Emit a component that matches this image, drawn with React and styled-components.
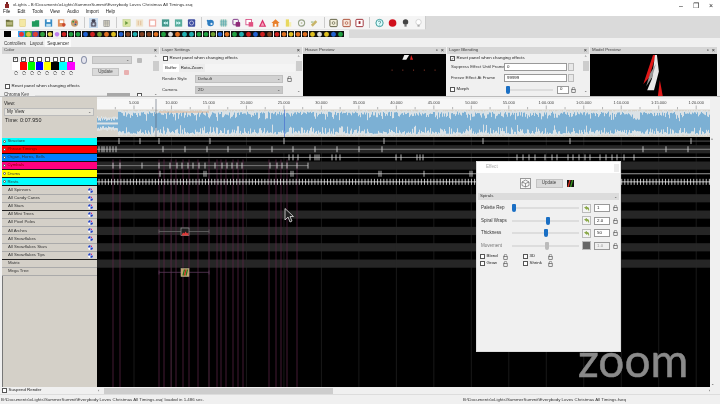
import React from 'react';
import styled, { createGlobalStyle } from 'styled-components';

const Global = createGlobalStyle`
  html, body { margin: 0; padding: 0; background: #f0f0f0; overflow: hidden; }
  * { box-sizing: border-box; }
`;

const Page = styled.div`
  width: 720px; height: 404px; display: flex; flex-direction: column; overflow: hidden;
  background: #f0f0f0; color: #222; filter: blur(0.3px);
  font: 4.5px/1 "Liberation Sans", Arial, sans-serif;
`;
const TitleBar = styled.div`
  height: 9px; background: #fff; display: flex; align-items: center; padding: 1px 6px 0 5px; gap: 4px; font-size: 4.4px;
`;
const TitleText = styled.span`flex: 1; color: #333;`;
const WinButtons = styled.div`display: flex; gap: 10px; font-size: 7px; color: #222; padding-right: 1px;`;
const MenuBar = styled.div`
  height: 7px; background: #fff; display: flex; align-items: center; padding-left: 3px; gap: 7px; font-size: 4.6px;
`;
const ToolBand = styled.div`background: #dadada; height: 22px; display: flex; flex-direction: column;`;
const ToolRow = styled.div`
  height: 14px; width: 426px; background: #f5f5f5; display: flex; align-items: center; padding-left: 5px; border-right: 1px solid #ccc; border-bottom: 1px solid #e4e4e4;
`;
const ToolGroup = styled.div`
  display: flex; gap: 3.9px; padding-right: 5px; margin-right: 4.3px; border-right: 1px solid #ccc; height: 11px; align-items: center;
  &:last-child { border-right: 0; padding-right: 0; margin-right: 0; }
`;
const ToolSlot = styled.div`width: 9.1px; height: 10px; display: flex; align-items: center; justify-content: center; background: ${p => p.$on ? '#c8dcf0' : 'transparent'};`;
const FxStrip = styled.div`height: 8px; width: 349px; background: #f0f0f0; display: flex; gap: 0.6px; padding: 1px 0 1px 4px;`;
const FxIcon = styled.div`width: 6.5px; height: 6px; background: radial-gradient(circle at 50% 55%, ${p => p.$b} 0 38%, ${p => p.$a} 62%);`;
const TabStrip = styled.div`height: 9px; background: #f0f0f0; display: flex; align-items: flex-end; padding-left: 2px; gap: 0; `;
const Tab = styled.div`padding: 3px 2px 0; height: 8px; color: #333; background: ${p => p.$on ? '#fafafa' : 'transparent'};`;

const PanelRow = styled.div`
  height: 50px; display: grid; grid-template-columns: 157px 142px 143px 142px 127px; gap: 1px; padding-left: 2px; background: #f0f0f0; border-bottom: 1px solid #bbb;
`;
const Panel = styled.section`display: flex; flex-direction: column; overflow: hidden; background: #f0f0f0; min-width: 0;`;
const PanelHead = styled.header`
  height: 7px; background: #d6d6d6; display: flex; align-items: center; padding: 0 2px; gap: 3px; color: #444; font-size: 4.4px; flex: none;
`;
const PanelTitle = styled.span`flex: 1;`;
const HeadBtn = styled.span`font-size: 5.5px; color: #222; line-height: 5px;`;
const PanelBody = styled.div`flex: 1; min-height: 0; display: grid; grid-template-columns: 1fr 7px; background: #f0f0f0;`;
const Scroll = styled.div`
  background: #f0f0f0; display: flex; flex-direction: column; align-items: center; justify-content: space-between; padding: 2px 0; position: relative; font-size: 3.6px; color: #444;
`;
const ScrollThumb = styled.div`width: 6px; height: 10px; background: #cdcdcd; margin-top: 1px; margin-bottom: auto;`;
const BlackPane = styled.div`flex: 1; background: #000; min-height: 0;`;
const PaneSvg = styled.svg`display: block; width: 100%; height: 100%;`;

const ColorBody = styled.div`display: flex; flex-direction: column; padding: 2px 0 0 2px; gap: 2px;`;
const ColorTop = styled.div`display: flex; height: 26px;`;
const Palette = styled.div`
  margin-left: 8px; width: 63px; display: grid; grid-template-columns: repeat(8, 7.85px); grid-template-rows: 6px 8px 6px; justify-items: center; align-items: center;
`;
const Swatch = styled.div`width: 7.4px; height: 7.5px; background: ${p => p.$c};`;
const DotMark = styled.div`width: 4px; height: 4px; border: 1px dotted #444; border-radius: 50%;`;
const ColorSide = styled.div`margin-left: 6px; display: flex; flex-direction: column; gap: 4px; padding-top: 0;`;
const SideRow = styled.div`display: flex; align-items: center; gap: 5px;`;
const RoundIcon = styled.div`width: 6px; height: 8px; border: 1px solid #8890a8; border-radius: 50%; background: #e4e4ee;`;
const SelectBox = styled.div`
  width: ${p => p.$w || 40}px; height: ${p => p.$h || 8}px; background: ${p => p.$bg || '#d2d2d2'}; border: 1px solid #c0c0c0; display: flex; align-items: center; justify-content: space-between; padding: 0 2px; color: #333; font-size: 4.4px;
`;
const Caret = styled.span`font-size: 4px; color: #444;`;
const SmallGlyph = styled.div`width: 5px; height: 5px; background: ${p => p.$c || '#bbb'}; border-radius: 1px;`;
const UpdateBtn = styled.button`
  width: ${p => p.$w || 27}px; height: ${p => p.$h || 8}px; background: #dadada; border: 1px solid #c4c4c4; padding: 0; font: inherit; color: #444; font-size: 4.5px; margin-left: ${p => p.$ml || 0}px;
`;
const CheckRow = styled.label`display: flex; align-items: center; gap: 1.5px; color: #222; font-size: 4.4px; white-space: nowrap; padding-left: ${p => p.$pl || 0}px;`;
const Box = styled.span`
  width: 5px; height: 5px; border: 0.7px solid #555; background: #fff; flex: none; display: inline-flex; align-items: center; justify-content: center; font-size: 4px; color: #222; line-height: 1;
`;
const ChromaRow = styled.div`display: flex; align-items: center; height: 7px; margin-top: 1px;`;
const ChromaLabel = styled.span`width: 31px; color: #333;`;
const ChromaTrack = styled.div`width: 72px; height: 2px; background: #ddd;`;
const ChromaBlock = styled.div`width: 23px; height: 5px; background: #a8a8a8; margin-right: 7px;`;

const LayerBody = styled.div`display: flex; flex-direction: column; padding: 2px 0 0 2px; gap: 1px;`;
const SettingsBody = styled(LayerBody)`gap: 1px;`;
const TabsRow = styled.div`display: flex; margin: 2px 0 1px 1px; background: #f4f4f4;`;
const InnerTab = styled.div`padding: 2px 2px; background: ${p => p.$on ? '#fff' : '#ececec'}; height: 8px; font-size: 4.4px;`;
const FormRow = styled.div`display: flex; align-items: center; height: ${p => p.$h || 10}px; gap: 0;`;
const FormLabel = styled.span`width: ${p => p.$w || 33}px; color: #333; flex: none; font-size: 4.3px; padding-left: ${p => p.$pl || 0}px; white-space: nowrap;`;
const NumberBox = styled.div`
  width: ${p => p.$w || 63}px; height: 8px; background: ${p => p.$off ? '#efefef' : '#fff'}; border: 0.7px solid #999; display: flex; align-items: center; padding-left: 2px; color: ${p => p.$off ? '#999' : '#222'}; padding-right: 1px; flex: none; font-size: 4.4px;
`;
const Spin = styled.div`width: 6px; height: 8px; margin-left: 1px; background: #e8e8e8; border: 0.5px solid #bbb; flex: none;`;
const LockWrap = styled.span`display: inline-flex; width: 5px; justify-content: center; flex: none; margin-left: ${p => p.$ml || 0}px;`;
const MorphTrack = styled.div`width: 47px; height: 2px; background: #ddd; margin: 0 4px 0 37px; position: relative;`;

const Main = styled.div`display: flex; min-height: 0; height: 290px; flex: none; background: #f0f0f0;`;
const LeftCol = styled.div`width: 97px; flex: none; padding-left: 2px; display: flex; flex-direction: column;`;
const ViewBox = styled.div`height: 40.5px; background: #d4d0c8; padding: 5px 3px 0 2px; display: flex; flex-direction: column; flex: none; font-size: 4.6px;`;
const ViewLabel = styled.div`height: 5px; color: #222;`;
const ViewSelect = styled.div`
  height: 8px; background: #e4e2dc; display: flex; justify-content: space-between; align-items: center; padding: 0 2px; margin-top: 1px; width: 90px; color: #222; border: 0.5px solid #bbb;
`;
const TimeText = styled.div`margin: 2px 0 0 1px; font-size: 5.4px; color: #222; letter-spacing: .05px;`;
const Rows = styled.div`display: grid; grid-auto-rows: 8.17px; flex: none;`;
const Row = styled.div`
  background: ${p => p.$c}; display: flex; align-items: center; padding-left: ${p => p.$timing ? 1 : 6}px; gap: 1.5px; color: ${p => p.$ink || '#333'}; border-bottom: 1px solid ${p => p.$timing ? '#111' : (p.$strong ? '#222' : '#aaa')}; font-size: 4.3px; min-width: 0;
`;
const RowDot = styled.span`width: 3px; height: 3px; border-radius: 50%; background: #fff; flex: none; border: .5px solid #555;`;
const RowName = styled.span`flex: 1; white-space: nowrap;`;
const RowIcon = styled.svg`width: 5px; height: 5px; margin-right: 4px; flex: none;`;
const Filler = styled.div`flex: 1; background: #d4d0c8; border-left: 1px solid #777;`;
const Track = styled.div`flex: 1; min-width: 0; position: relative; background: #000; overflow: hidden; height: 290px;`;
const TrackSvg = styled.svg`display: block;`;
const VScroll = styled.div`width: 10px; flex: none; background: #f0f0f0; padding: 41px 0 1px 1px; font-size: 4px; color: #333; display:flex; flex-direction: column; justify-content: space-between;`;

const EffectWin = styled.div`
  position: absolute; left: 379px; top: 64px; width: 145px; height: 191px; background: #f0f0f0; display: flex; flex-direction: column; border: 0.5px solid #ddd;
`;
const EffectTitle = styled.div`height: 11px; background: #fff; color: #aaa; padding: 3px 0 0 9px; font-size: 4.6px; display: flex; justify-content: space-between;`;
const EffectTitleBtn = styled.span`width: 5px; height: 8px; background: #ececec; margin: -1px 1px 0 0;`;
const EffectTop = styled.div`display: flex; align-items: center; justify-content: center; gap: 4px; height: 20px; padding-right: 4px; `;
const EffectIconBtn = styled.div`width: 11px; height: 11px; border: 0.7px solid #999; background: #f8f8f8; display: flex; align-items: center; justify-content: center;`;
const EffectSelect = styled.div`
  margin: 0 1px; height: 7px; background: #dcdcdc; display: flex; justify-content: space-between; align-items: center; padding: 0 2px; color: #333; font-size: 4.4px;
`;
const SliderList = styled.div`display: grid; grid-auto-rows: 12.5px; padding: 2px 3px 1px 4px;`;
const SliderRow = styled.div`display: grid; grid-template-columns: 31px 70px 12px 19px 5px; align-items: center; color: ${p => p.$off ? '#777' : '#333'}; font-size: 4.5px;`;
const SliderTrack = styled.div`height: 2px; background: #ddd; margin: 0 3px 0 0; position: relative;`;
const Thumb = styled.span`
  position: absolute; top: -3px; left: 0; width: 4px; height: 8px; background: ${p => p.$off ? '#bbb' : '#1a6fc4'}; border-radius: 1px 1px 2px 2px;
`;
const ArrowBtn = styled.div`width: 9px; height: 9px; background: ${p => p.$off ? '#666' : '#f4f4f4'}; border: 0.5px solid #bbb; display: flex; align-items: center; justify-content: center;`;
const CheckGrid = styled.div`display: grid; grid-template-columns: 23px 20px 25px 20px; grid-auto-rows: 7px; padding: 0 0 0 3px; align-items: center;`;
const ZoomMark = styled.div`
  position: absolute; left: 481px; top: 240px; color: #8a8a8a; font: 400 46px/46px "Lato", "Open Sans", sans-serif; -webkit-text-stroke: .5px #8a8a8a;
`;
const Cursor = styled.svg`position: absolute; left: 187px; top: 111px;`;

const BottomRow = styled.div`height: 7px; display: flex; align-items: center; padding-left: 2px; background: #f0f0f0; flex: none;`;
const SuspendWrap = styled.div`width: 96px; display: flex;`;
const HScroll = styled.div`flex: 1; height: 6px; background: #f0f0f0; display: flex; align-items: center; padding-right: 10px; font-size: 4px; color: #333;`;
const HThumb = styled.div`width: 229px; height: 6px; background: #cdcdcd; margin-left: 5px; margin-right: auto;`;
const StatusBar = styled.div`flex: 1; display: flex; align-items: center; padding: 2px 0 0 1px; font-size: 4.4px; color: #333; background: #f0f0f0; border-top: .5px solid #ddd;`;
const StatusLeft = styled.span`width: 462px; flex: none; white-space: nowrap;`;

function rng(seed) { let s = seed; return () => { s = (s * 16807) % 2147483647; return s / 2147483647; }; }

const Lock = () => (
  <svg width="5" height="6" viewBox="0 0 5 6"><path d="M1.2 2.6V1.6a1.3 1.3 0 0 1 2.6 0" fill="none" stroke="#444" strokeWidth=".6" /><rect x=".8" y="2.6" width="3.4" height="3" fill="none" stroke="#444" strokeWidth=".6" /></svg>
);

const toolShapes = {
  folder: <><rect x="1" y="2" width="8" height="7" fill="#8a9050" /><rect x="1" y="1.5" width="4" height="2" fill="#6a6a40" /><rect x="2" y="4" width="6" height="3" fill="#b8b880" /></>,
  doc: <><rect x="2" y="1" width="6" height="8" fill="#f4e8a4" stroke="#d8c060" strokeWidth=".5" /></>,
  green: <path d="M1 3h3l1-1h4v7H1z" fill="#209a5c" />,
  save: <><rect x="1" y="1" width="8" height="8" fill="#3a8cc4" /><rect x="3" y="1" width="4" height="3" fill="#fff" /><rect x="2.5" y="6" width="5" height="3" fill="#bfe0f0" /></>,
  saveas: <><rect x="1" y="1" width="7" height="8" fill="#e0905c" /><rect x="3" y="2" width="4" height="3" fill="#fff" /><circle cx="7.5" cy="7" r="2" fill="#c84a30" /></>,
  palette: <><circle cx="5" cy="5" r="4" fill="#c8a070" /><circle cx="3.5" cy="3.5" r="1" fill="#309040" /><circle cx="6.5" cy="4" r="1" fill="#d04030" /><circle cx="6" cy="6.5" r="1" fill="#3050a0" /></>,
  render: <><rect x="3" y="1" width="4" height="3" rx="1" fill="#445" /><rect x="2" y="4" width="6" height="5" rx="1" fill="#667" /><circle cx="5" cy="6.5" r="1.2" fill="#cde" /></>,
  calc: <><rect x="2" y="2" width="6" height="7" fill="#d8d4c4" stroke="#888" strokeWidth=".6" /><path d="M2 4h6M2 6h6M4 2v7M6 2v7" stroke="#888" strokeWidth=".4" /></>,
  play: <><rect x="1" y="1" width="8" height="8" fill="#d8e4a0" stroke="#b8c888" strokeWidth=".5" /><path d="M3.5 2.8L7 5 3.5 7.2z" fill="#6a9a40" /></>,
  pause: <><rect x="1" y="1" width="8" height="8" fill="#f0e4cc" /><rect x="3" y="2.5" width="1.3" height="5" fill="#e4c4a0" /><rect x="5.6" y="2.5" width="1.3" height="5" fill="#e4c4a0" /></>,
  stop: <><rect x="1" y="1" width="8" height="8" fill="#f0b0a8" /><rect x="2.4" y="2.4" width="5.2" height="5.2" fill="#fff" /></>,
  rew: <><rect x="1" y="1" width="8" height="8" fill="#44988c" /><path d="M5 3L2.5 5 5 7zM7.5 3L5 5l2.5 2z" fill="#dff" /></>,
  ff: <><rect x="1" y="1" width="8" height="8" fill="#58ac9c" /><path d="M2.5 3L5 5 2.5 7zM5 3l2.5 2L5 7z" fill="#dff" /></>,
  loop: <><rect x="1" y="1" width="8" height="8" rx="1" fill="#3c4ca0" /><circle cx="5" cy="5" r="2.2" fill="none" stroke="#dde" strokeWidth=".8" /></>,
  gear: <><circle cx="5" cy="5" r="3.6" fill="#2c7cc0" /><circle cx="6" cy="6" r="1.2" fill="#e4eef8" /><circle cx="2" cy="2.6" r="1.2" fill="#2c7cc0" /></>,
  grid: <><rect x="1" y="1" width="8" height="8" fill="#dce8d8" /><path d="M3 1v8M5 1v8M7 1v8M1 3h8M1 5h8M1 7h8" stroke="#48a0a8" strokeWidth=".7" /></>,
  purple: <><rect x="1" y="1" width="6" height="6" rx="1" fill="none" stroke="#7a2c80" strokeWidth="1" /><rect x="4" y="4" width="5" height="5" rx="1" fill="#902c78" /></>,
  pink: <><rect x="1" y="1" width="6" height="6" fill="#fff" stroke="#d03070" strokeWidth=".8" /><rect x="4" y="4" width="5" height="5" fill="#e05080" /></>,
  tri: <><path d="M5 1l4 8H1z" fill="#d82c68" /><path d="M5 4l2 4H3z" fill="#f4a0b8" /></>,
  house: <><path d="M5 1L9.5 5H8v4H2V5H.5z" fill="#e8802c" /><rect x="4" y="6" width="2" height="3" fill="#fff" /></>,
  ydoc: <><rect x="2" y="1" width="3.5" height="8" fill="#e8d860" /><rect x="5.5" y="4" width="2.5" height="5" fill="#f4eeb0" /></>,
  cog: <><circle cx="5" cy="5" r="3.4" fill="none" stroke="#98a488" strokeWidth="1.2" /><circle cx="5" cy="5" r="1" fill="#c0c8a8" /></>,
  pencil: <><path d="M1 7l5-5 2 2-5 5z" fill="#c8b468" /><rect x="1" y="3" width="3" height="2" fill="#bcd0b0" /></>,
  zoomA: <><rect x="1" y="1" width="8" height="8" rx="1" fill="#f4f0dc" stroke="#58583c" strokeWidth="1" /><circle cx="5" cy="5" r="1.5" fill="none" stroke="#58583c" strokeWidth=".7" /></>,
  zoomB: <><rect x="1" y="1" width="8" height="8" rx="1" fill="#f8e8dc" stroke="#a84830" strokeWidth="1" /><circle cx="5" cy="5" r="1.5" fill="none" stroke="#a84830" strokeWidth=".7" /></>,
  zoomC: <><rect x="1" y="1" width="8" height="8" rx="1" fill="#fff" stroke="#98242c" strokeWidth="1" /><rect x="4" y="3" width="2" height="3" fill="#98242c" /></>,
  help: <><circle cx="5" cy="5" r="4" fill="#dff" stroke="#208888" strokeWidth=".9" /><path d="M3.8 4a1.2 1.2 0 1 1 1.6 1.2L5 6M5 7v.8" fill="none" stroke="#206060" strokeWidth=".7" /></>,
  rec: <circle cx="5" cy="5" r="4.2" fill="#d0101c" />,
  bulbD: <><circle cx="5" cy="4" r="3" fill="#444" /><rect x="3.8" y="7" width="2.4" height="2" fill="#777" /></>,
  bulbW: <><circle cx="5" cy="4" r="3" fill="#fff" stroke="#bbb" strokeWidth=".6" /><rect x="3.8" y="7" width="2.4" height="2" fill="#aaa" /></>,
};
const Tool = ({ k, on }) => (
  <ToolSlot $on={on}><svg width="10" height="10" viewBox="0 0 10 10">{toolShapes[k]}</svg></ToolSlot>
);
const toolGroups = [
  { k: ['folder', 'doc', 'green', 'save', 'saveas', 'palette'] },
  { k: ['render', 'calc'], on: 'render' },
  { k: ['play', 'pause', 'stop', 'rew', 'ff', 'loop'] },
  { k: ['gear', 'grid', 'purple', 'pink', 'tri', 'house', 'ydoc', 'cog', 'pencil'] },
  { k: ['zoomA', 'zoomB', 'zoomC'] },
  { k: ['help', 'rec', 'bulbD', 'bulbW'] },
];

const fxAccents = ['#d02020', '#20a040', '#e0c020', '#2060d0', '#d020b0', '#20b0b0', '#e07020', '#ddd', '#70a030', '#804020'];
const fxRand = rng(77);
const fxIcons = [['#000', '#000'], ['#fff', '#fff'], ['#30a0f0', '#f03030'], ['#30a040', '#e0c040'], ['#4050a0', '#e04030'], ['#111', '#30a040'], ['#111', '#e0d040'], ['#f0f0f0', '#c080f0']];
for (let i = 0; i < 40; i++) {
  fxIcons.push(['#101010', fxAccents[Math.floor(fxRand() * 10)]]);
}

const swatches = ['#fff', '#f00', '#0f0', '#00f', '#ff0', '#000', '#0ff', '#f0f'];
const timingRows = [
  ['Structure', '#00ffff'], ['Phrase Timings', '#ff0000', '#700'], ['Organ, Horns, Bells', '#0080ff'],
  ['Cymbals', '#ff0080', '#800'], ['Drums', '#ffff00'], ['Rests', '#00ffff'],
];
const modelRows = ['All Spinners', 'All Candy Canes', 'All Stars', 'All Mini Trees', 'All Pixel Poles', 'All Arches', 'All Snowflakes', 'All Snowflakes Stars', 'All Snowflakes Tips', 'Matrix', 'Mega Tree'];

const TOP = 137.5, PITCH = 8.17;
const rowY = i => TOP + PITCH * i;
const majors = Array.from({ length: 16 }, (_, i) => 134 + 37.48 * i);
const labels = ['5.000', '10.000', '15.000', '20.000', '25.000', '30.000', '35.000', '40.000', '45.000', '50.000', '55.000', '1:00.000', '1:05.000', '1:10.000', '1:15.000', '1:20.000'];
const redLines = [113, 120, 159, 164, 171, 176, 183, 189, 198, 209, 217, 221, 226, 233, 238, 243, 269, 276, 281, 287, 297];
const ticks = [
  { y: 0, c: '#555', xs: [119, 140, 159, 210, 284, 384, 483, 570, 691] },
  { y: 1, c: '#888', xs: [99, 102, 104, 107, 110, 113, 116, 163, 185, 207, 228, 250, 272, 293, 315, 337, 359, 382, 643, 666, 688] },
  { y: 2, c: '#8a8a8a', xs: [289, 293, 298, 310, 315, 317, 319, 332, 336, 340, 396, 401, 417, 420, 423, 517, 523, 529, 535, 545, 552, 557, 568, 573, 579, 585, 590, 600, 606, 612, 617, 624, 634] },
  { y: 3, c: '#777', xs: [113, 120, 142, 159, 170, 177, 182, 188, 193, 199, 205, 215, 222, 227, 232, 237, 242, 270, 277, 282, 287, 297, 308], end: 308 },
  { y: 4, c: '#999', xs: [160, 204, 206, 291, 293, 379, 381, 424, 470, 472] },
];

function buildWave() {
  const r = rng(4242);
  let blue = '', light = '';
  for (let i = 97; i < 710; i++) {
    const x = i + .5;
    const quiet = i < 118;
    const dip = Math.abs(i - 637) < 3;
    const top = quiet ? 117 + r() * 2 : 111 + r() * 1.5;
    const bot = quiet ? 129 + r() * 2 : 136 - r() * 1.5;
    blue += `M${x} ${top}V${bot}`;
    const lt = quiet ? 1 + r() * 2 : (dip ? 8 : 1 + r() * r() * 9);
    const lb = quiet ? 1 + r() * 2 : (dip ? 4 : 1 + r() * r() * 9);
    light += `M${x} ${top - .5}V${top + lt}M${x} ${bot - lb}V${bot + .5}`;
    if (quiet) light += `M${x} 123V125`;
  }
  return { blue, light };
}
const wave = buildWave();
const restTicks = (() => { const a = []; for (let x = 99; x < 710; x += 3.13) a.push(x); return a; })();

function Timeline() {
  return (
    <TrackSvg width="613" height="290" viewBox="97 97.5 613 290">
      <rect x="97" y="97" width="613" height="3" fill="#f0f0f0" />
      <rect x="97" y="99.5" width="613" height="11" fill="#f7f7f7" />
      {majors.map((x, i) => <g key={x}>
        <text x={x} y="104.5" fontSize="4" fontFamily="Liberation Sans" fill="#444" textAnchor="middle">{labels[i]}</text>
        <path d={`M${x} 106V110M${x - 18.7} 107.5V110`} stroke="#888" strokeWidth=".6" />
      </g>)}
      <rect x="97" y="110" width="613" height="27.5" fill="#d6d2ca" />
      <path d={wave.blue} stroke="#7cb0d4" strokeWidth="1" />
      <path d={wave.light} stroke="#e6e8e8" strokeWidth="1" opacity=".9" />
      <path d="M159 112.5H209" stroke="#e0a070" strokeWidth=".7" />
      <path d="M156 99.5V137.5" stroke="#556070" strokeWidth=".6" />
      <path d="M284.5 110V137.5" stroke="#4a70d0" strokeWidth="1" opacity=".7" />
      <rect x="97" y="137.5" width="613" height="250" fill="#000" />
      {[1, 3, 7, 9, 11, 13, 15].map(i => <rect key={i} x="97" y={rowY(i)} width="613" height={PITCH} fill="#262626" />)}
      {majors.map(x => <path key={x} d={`M${x} 137.5V387.5`} stroke="#2a2a2a" strokeWidth=".6" />)}
      {redLines.map(x => <path key={x} d={`M${x} 160V387.5`} stroke="#63264c" strokeWidth=".7" />)}
      {ticks.map(t => {
        const cy = rowY(t.y) + PITCH / 2;
        return <g key={t.y}>
          <path d={`M97 ${cy}H${t.end || 710}`} stroke={t.c} strokeWidth="1" />
          <path d={t.xs.map(x => `M${x} ${cy - 3}V${cy + 3}`).join('')} stroke="#ddd" strokeWidth=".8" />
        </g>;
      })}
      <path d={`M97 ${rowY(5) + 4}H710`} stroke="#bbb" strokeWidth="1" />
      <path d={restTicks.map(x => `M${x} ${rowY(5) + 1}V${rowY(5) + 7}`).join('')} stroke="#eee" strokeWidth=".8" />
      <path d="M159 232H209M159 230v4M209 230v4" stroke="#666" strokeWidth=".8" />
      <rect x="181" y="228.5" width="8" height="7.5" fill="#222" stroke="#999" strokeWidth=".7" />
      <path d="M181.5 236l1.5-3 1.5 1 1-2 1.5 2 1.5-1v3z" fill="#e03a3a" />
      <path d="M159 272.8H209M159 271v4M209 271v4" stroke="#5a3a5a" strokeWidth=".8" />
      <rect x="181" y="269" width="8" height="8" fill="#c8a070" stroke="#aa8" strokeWidth=".6" />
      <path d="M183 276l1.5-6M186 276l1.5-6" stroke="#1a7a1a" strokeWidth="1.2" />
      <path d="M184.5 276l1.5-6" stroke="#c02a1a" strokeWidth="1.1" />
    </TrackSvg>
  );
}

const CubeIcon = () => (
  <svg width="9" height="9" viewBox="0 0 9 9"><path d="M4.5 1L8 3v3.5L4.5 8 1 6.5V3zM1 3l3.5 1.5L8 3M4.5 4.5V8" fill="none" stroke="#555" strokeWidth=".6" /></svg>
);
const StripeIcon = () => (
  <svg width="7" height="7" viewBox="0 0 7 7"><rect width="7" height="7" fill="#111" /><path d="M1 7l2-7" stroke="#e03020" strokeWidth="1.2" /><path d="M3.6 7l2-7" stroke="#40a020" strokeWidth="1.2" /></svg>
);
const GreenArrow = () => (
  <svg width="7" height="7" viewBox="0 0 7 7"><path d="M1 2.5L4 1v1c2 0 2.5 2 2 4.5C5.5 5 5 4 4 4v1z" fill="#8aa848" /></svg>
);

const sliders = [
  { name: 'Palette Rep', at: 0, val: '1' },
  { name: 'Spiral Wraps', at: 34, val: '2.0' },
  { name: 'Thickness', at: 32, val: '50' },
  { name: 'Movement', at: 33, val: '1.0', off: true },
];

function EffectPanel() {
  return (
    <EffectWin>
      <EffectTitle>Effect<EffectTitleBtn /></EffectTitle>
      <EffectTop>
        <EffectIconBtn><CubeIcon /></EffectIconBtn>
        <UpdateBtn $w={27} $h={9} $ml={1}>Update</UpdateBtn>
        <StripeIcon />
      </EffectTop>
      <EffectSelect>Spirals<Caret>⌄</Caret></EffectSelect>
      <SliderList>
        {sliders.map(s => (
          <SliderRow key={s.name} $off={s.off}>
            <span>{s.name}</span>
            <SliderTrack><Thumb $off={s.off} style={{ left: `${s.at}px` }} /></SliderTrack>
            <ArrowBtn $off={s.off}>{s.off ? null : <GreenArrow />}</ArrowBtn>
            <NumberBox $w={16} $off={s.off}>{s.val}</NumberBox>
            <LockWrap><Lock /></LockWrap>
          </SliderRow>
        ))}
      </SliderList>
      <CheckGrid>
        <CheckRow><Box />Blend</CheckRow><LockWrap><Lock /></LockWrap>
        <CheckRow><Box />3D</CheckRow><LockWrap><Lock /></LockWrap>
        <CheckRow><Box />Grow</CheckRow><LockWrap><Lock /></LockWrap>
        <CheckRow><Box />Shrink</CheckRow><LockWrap><Lock /></LockWrap>
      </CheckGrid>
    </EffectWin>
  );
}

export default function App() {
  return (
    <Page>
      <Global />
      <TitleBar>
        <svg width="4" height="6" viewBox="0 0 4 6"><rect x="1" width="2" height="2" fill="#702020" /><rect y="2" width="4" height="4" fill="#902828" /></svg>
        <TitleText>xLights - B:\Documents\xLights\SummerSummit\Everybody Loves Christmas All Timings.xsq</TitleText>
        <WinButtons><span>–</span><span>❐</span><span>×</span></WinButtons>
      </TitleBar>
      <MenuBar>{['File', 'Edit', 'Tools', 'View', 'Audio', 'Import', 'Help'].map(m => <span key={m}>{m}</span>)}</MenuBar>
      <ToolBand>
        <ToolRow>
          {toolGroups.map((g, i) => <ToolGroup key={i}>{g.k.map(k => <Tool key={k} k={k} on={g.on === k} />)}</ToolGroup>)}
        </ToolRow>
        <FxStrip>{fxIcons.map((f, i) => <FxIcon key={i} $a={f[0]} $b={f[1]} />)}</FxStrip>
      </ToolBand>
      <TabStrip>
        <Tab>Controllers</Tab><Tab>Layout</Tab><Tab $on>Sequencer</Tab>
      </TabStrip>
      <PanelRow>
        <Panel>
          <PanelHead><PanelTitle>Color</PanelTitle><HeadBtn>×</HeadBtn></PanelHead>
          <PanelBody>
            <ColorBody>
              <ColorTop>
                <Palette>
                  {swatches.map((c, i) => <Box key={c}>{i < 2 ? '✓' : ''}</Box>)}
                  {swatches.map(c => <Swatch key={c} $c={c} />)}
                  {swatches.map(c => <DotMark key={c} />)}
                </Palette>
                <ColorSide>
                  <SideRow><RoundIcon /><SelectBox $w={40}><span /><Caret>⌄</Caret></SelectBox><SmallGlyph /></SideRow>
                  <SideRow><UpdateBtn $ml={11}>Update</UpdateBtn><SmallGlyph $c="#e8b0b0" /></SideRow>
                </ColorSide>
              </ColorTop>
              <CheckRow $pl={1}><Box />Reset panel when changing effects</CheckRow>
              <ChromaRow><ChromaLabel>Chroma Key</ChromaLabel><ChromaTrack /><ChromaBlock /><Box /></ChromaRow>
            </ColorBody>
            <Scroll>^<ScrollThumb />⌄</Scroll>
          </PanelBody>
        </Panel>
        <Panel>
          <PanelHead><PanelTitle>Layer Settings</PanelTitle><HeadBtn>×</HeadBtn></PanelHead>
          <PanelBody>
            <SettingsBody>
              <CheckRow $pl={1}><Box />Reset panel when changing effects</CheckRow>
              <TabsRow><InnerTab $on>Buffer</InnerTab><InnerTab>Roto-Zoom</InnerTab></TabsRow>
              <FormRow><FormLabel>Render Style</FormLabel><SelectBox $w={88}>Default<Caret>⌄</Caret></SelectBox><LockWrap $ml={4}><Lock /></LockWrap></FormRow>
              <FormRow><FormLabel>Camera</FormLabel><SelectBox $w={88} $bg="#c8c8c8">2D<Caret>⌄</Caret></SelectBox></FormRow>
            </SettingsBody>
            <Scroll>^<ScrollThumb />⌄</Scroll>
          </PanelBody>
        </Panel>
        <Panel>
          <PanelHead><PanelTitle>House Preview</PanelTitle><HeadBtn>▫</HeadBtn><HeadBtn>×</HeadBtn></PanelHead>
          <BlackPane>
            <PaneSvg viewBox="0 0 143 43">
              <path d="M102 1h5l-3 5h-4z" fill="#eee" />
              <path d="M109 1l2 5h-3z" fill="#e02020" />
              {[89, 100, 111, 122, 133].map(x => <rect key={x} x={x} y="16" width="1" height="1" fill="#a04030" />)}
            </PaneSvg>
          </BlackPane>
        </Panel>
        <Panel>
          <PanelHead><PanelTitle>Layer Blending</PanelTitle><HeadBtn>×</HeadBtn></PanelHead>
          <PanelBody>
            <LayerBody>
              <CheckRow $pl={1}><Box>✓</Box>Reset panel when changing effects</CheckRow>
              <FormRow><FormLabel $w={55} $pl={2}>Suppress Effect Until Frame</FormLabel><NumberBox>0</NumberBox><Spin /></FormRow>
              <FormRow><FormLabel $w={55} $pl={2}>Freeze Effect At Frame</FormLabel><NumberBox>99999</NumberBox><Spin /></FormRow>
              <FormRow $h={11}>
                <CheckRow $pl={1}><Box />Morph</CheckRow>
                <MorphTrack><Thumb /></MorphTrack>
                <NumberBox $w={12}>0</NumberBox>
                <LockWrap $ml={2}><Lock /></LockWrap>
              </FormRow>
            </LayerBody>
            <Scroll>^<ScrollThumb />⌄</Scroll>
          </PanelBody>
        </Panel>
        <Panel>
          <PanelHead><PanelTitle>Model Preview</PanelTitle><HeadBtn>▫</HeadBtn><HeadBtn>×</HeadBtn></PanelHead>
          <BlackPane>
            <PaneSvg viewBox="0 0 127 43">
              <path d="M63 1h3L59 24l-6 7z" fill="#e01818" />
              <path d="M65 1h2l2 17-5 19h-7l5-12z" fill="#e8e8e8" />
              <path d="M60 20l6-10-4 14-6 9z" fill="#999" />
              <path d="M70 27l3 16h-5z" fill="#e01818" />
            </PaneSvg>
          </BlackPane>
        </Panel>
      </PanelRow>
      <Main>
        <LeftCol>
          <ViewBox>
            <ViewLabel>View:</ViewLabel>
            <ViewSelect>My View<Caret>⌄</Caret></ViewSelect>
            <TimeText>Time: 0:07.950</TimeText>
          </ViewBox>
          <Rows>
            {timingRows.map(([n, c, ink]) => (
              <Row key={n} $c={c} $ink={ink} $timing><RowDot /><RowName>{n}</RowName></Row>
            ))}
            {modelRows.map((n, i) => (
              <Row key={n} $c="#d4d0c8" $strong={i === 2 || i === 8}>
                <RowName>{n}</RowName>
                {i < 9 && <RowIcon viewBox="0 0 5 5"><circle cx="2.5" cy="2.5" r="2.5" fill="#fff" /><path d="M0 2.5a2.5 2.5 0 0 1 2.5-2.5V2.5z" fill="#2040c0" /><path d="M5 2.5a2.5 2.5 0 0 1-2.5 2.5V2.5z" fill="#2040c0" /><circle cx="3.6" cy="1.2" r=".8" fill="#c02060" /></RowIcon>}
              </Row>
            ))}
          </Rows>
          <Filler />
        </LeftCol>
        <Track>
          <Timeline />
          <EffectPanel />
          <ZoomMark>zoom</ZoomMark>
          <Cursor width="10" height="15" viewBox="0 0 10 15"><path d="M1 .5V12l3-3 2 5 2-1-2-4.5h3.5z" fill="#222" stroke="#ccc" strokeWidth=".9" /></Cursor>
        </Track>
        <VScroll><span>^</span><span>⌄</span></VScroll>
      </Main>
      <BottomRow>
        <SuspendWrap><CheckRow><Box />Suspend Render</CheckRow></SuspendWrap>
        <HScroll><span>‹</span><HThumb /><span>›</span></HScroll>
      </BottomRow>
      <StatusBar>
        <StatusLeft>B:\Documents\xLights\SummerSummit\Everybody Loves Christmas All Timings.xsq' loaded in 1.486 sec.</StatusLeft>
        <span>B:\Documents\xLights\SummerSummit\Everybody Loves Christmas All Timings.fseq</span>
      </StatusBar>
    </Page>
  );
}
